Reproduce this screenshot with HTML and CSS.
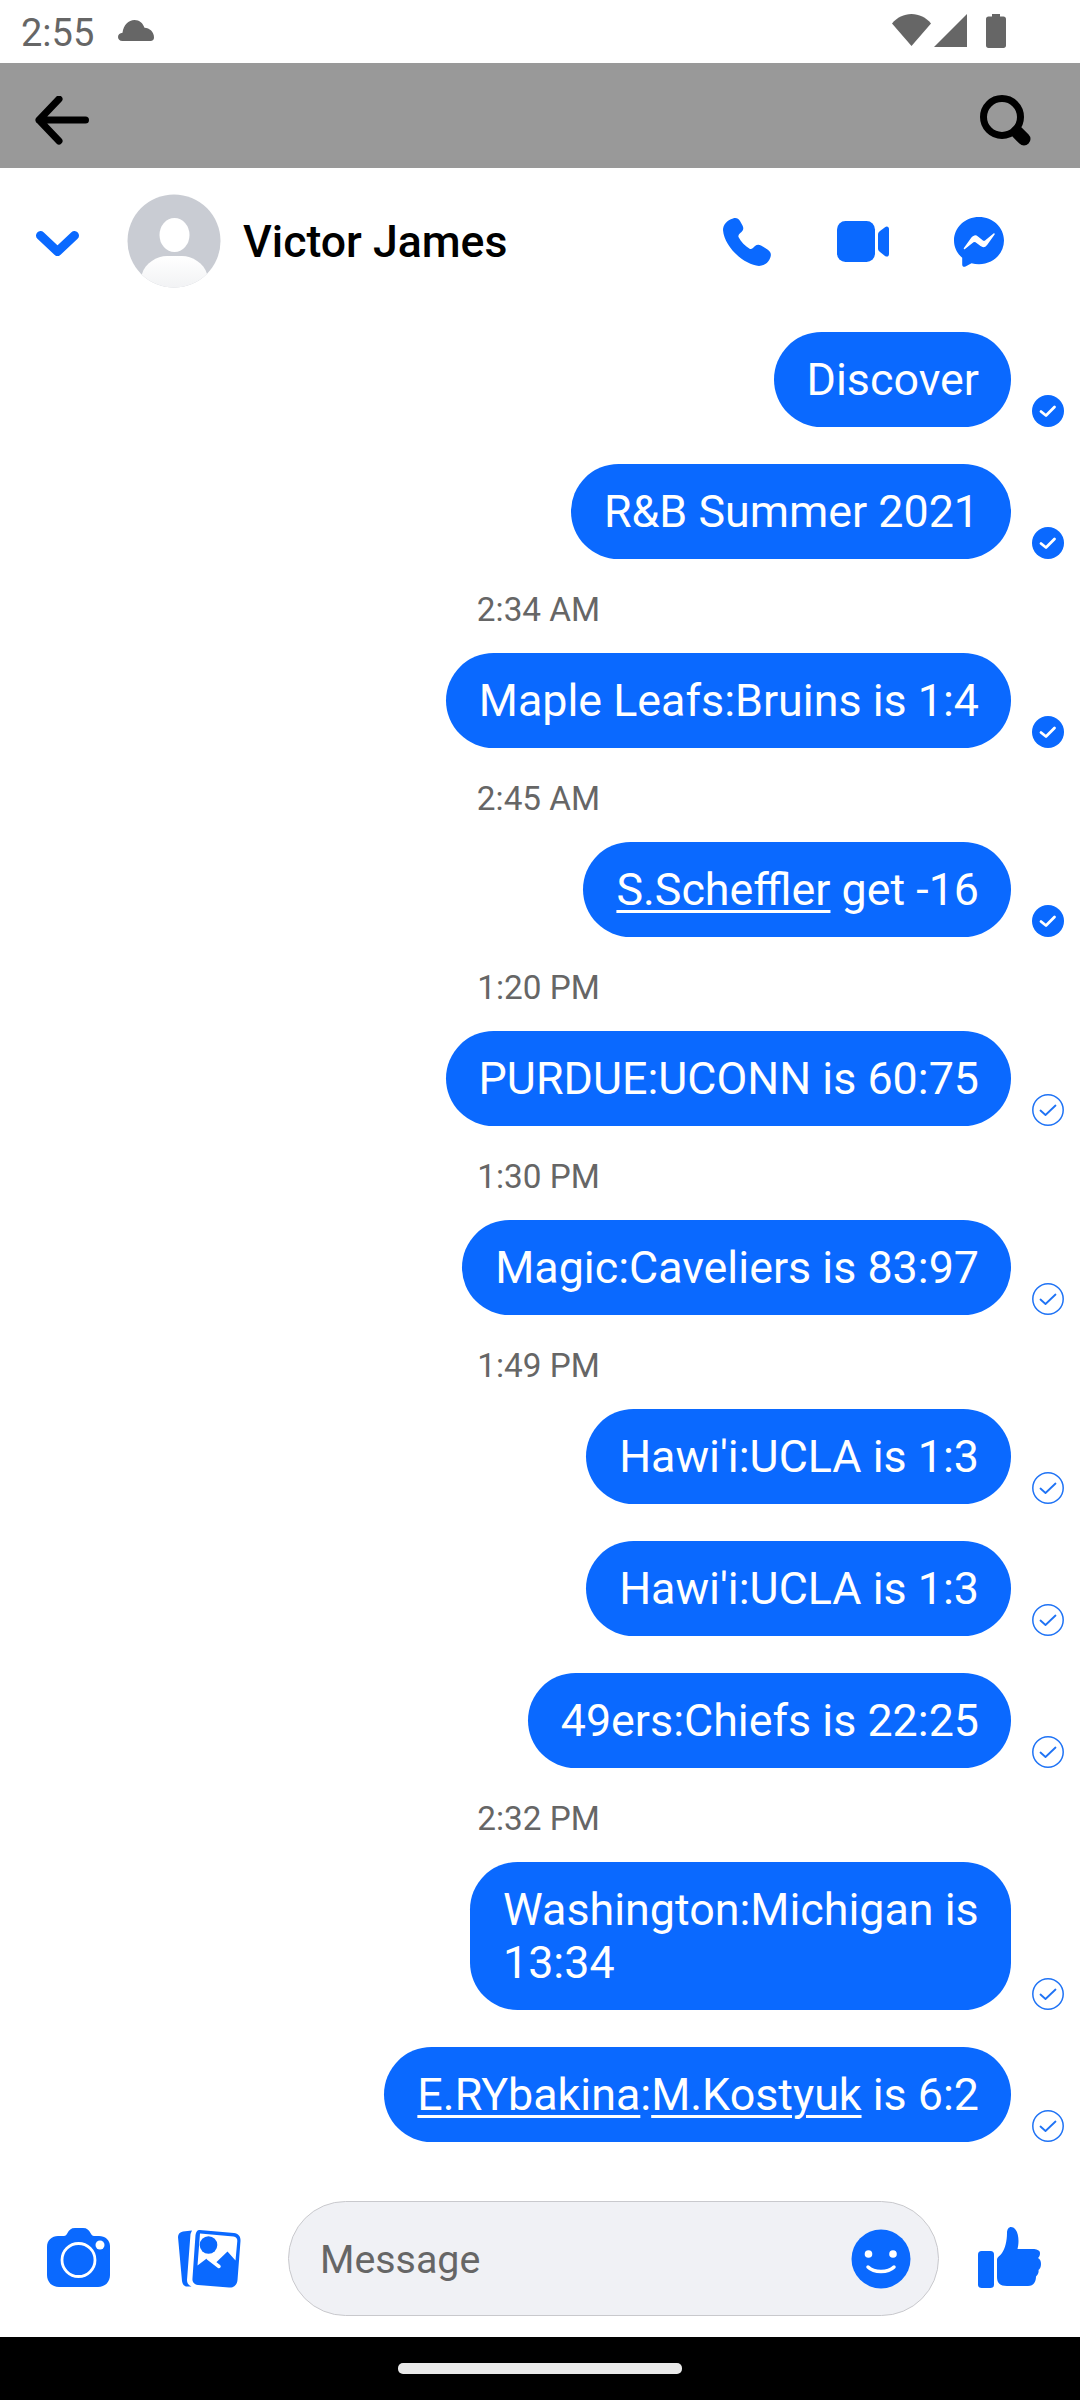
FILE: index.html
```html
<!DOCTYPE html>
<html lang="en">
<head>
<meta charset="utf-8">
<title>Victor James</title>
<link rel="stylesheet" href="styles.css">
</head>
<body>
<div class="screen">
  <div class="status">
    <span class="clock">2:55</span>
    <svg class="ic-cloud" viewBox="0 0 36 21"><path d="M4.5 21C1.5 21 0 19.300 0 17C0 14.500 2 13 4.500 12.700C5.500 5 10.500 0 16.500 0C21.500 0 25 3.200 26.500 7.800C31.500 8 36 12 36 17.500C36 19.800 34.800 21 32.500 21Z"/></svg>
    <span class="status-space"></span>
    <svg class="ic-wifi" viewBox="0 0 39 32"><path d="M0 9.500C5 3.500 12 0 19.500 0C27 0 34 3.500 39 9.500L19.500 32Z"/></svg>
    <svg class="ic-signal" viewBox="0 0 33 33"><path d="M33 0V33H0Z"/></svg>
    <svg class="ic-battery" viewBox="0 0 20 34"><path d="M6 0H14V2.500H17.500C19 2.500 20 3.500 20 5V31.500C20 33 19 34 17.500 34H2.500C1 34 0 33 0 31.500V5C0 3.500 1 2.500 2.500 2.500H6Z"/></svg>
  </div>

  <div class="appbar">
    <svg class="ic-back" viewBox="0 0 54 50"><path d="M4 24H50.500M24 3L4 24L24 45" fill="none" stroke="#000" stroke-width="7" stroke-linecap="round" stroke-linejoin="round"/></svg>
    <svg class="ic-search" viewBox="0 0 54 54"><circle cx="22" cy="22" r="18.500" fill="none" stroke="#000" stroke-width="7"/><path d="M37 37L44 44" stroke="#000" stroke-width="13" stroke-linecap="round"/></svg>
  </div>

  <header class="chat-head">
    <svg class="ic-chevron" viewBox="0 0 43 25"><path d="M4.500 4.500L21.500 20.500L38.500 4.500" fill="none" stroke="#0a69ff" stroke-width="9" stroke-linecap="round" stroke-linejoin="round"/></svg>
    <svg class="avatar" viewBox="0 0 94 94">
      <defs>
        <clipPath id="av"><circle cx="47" cy="47" r="46.500"/></clipPath>
        <linearGradient id="avb" x1="0" y1="0" x2="0" y2="1"><stop offset="0" stop-color="#fff"/><stop offset="1" stop-color="#eff0f2"/></linearGradient>
      </defs>
      <circle cx="47" cy="47" r="46.500" fill="#c9ccd3"/>
      <ellipse cx="47.500" cy="41" rx="15" ry="17" fill="#fff"/>
      <path clip-path="url(#av)" d="M15 80C18 69 30 62 40 62H55C65 62 77 69 80 80V100H15Z" fill="url(#avb)"/>
    </svg>
    <div class="name">Victor James</div>
    <div class="head-actions">
      <svg class="ic-phone" viewBox="0 0 48 48"><path d="M10 .5C13 -.5 15.500 .5 17 3L19.500 7.500C20.800 10 20.500 12 18.500 14C16.500 15.500 15 17 15.500 19C18 24 22 28 27 31C29 31.500 30.500 29.500 32 28C34 26.500 36 26.500 38 27.500L44.500 31.500C47.500 33.500 48.500 36 47.500 39C46 44 41.500 48 36 48C22 47 1.500 30 0 12C0 7 4 2 10 .5Z"/></svg>
      <svg class="ic-video" viewBox="0 0 52 41"><rect x="0" y="0" width="38" height="41" rx="8.500"/><path d="M41 13.500C41 12 41.800 11 43 10L48 6.200C50 4.800 52 5.800 52 8V33C52 35.400 50 36.200 48 35L43 31C41.800 30 41 29 41 27.500Z"/></svg>
      <svg class="ic-messenger" viewBox="0 0 50 50">
        <path d="M25 0C11.200 0 0 10.200 0 23.500C0 30.500 3.200 36.500 8.200 40.700V47.500C8.200 49.500 9.800 50.300 11.500 49.500L17.500 46.300C19.900 46.900 22.400 47.200 25 47.200C38.800 47.200 50 36.800 50 23.500C50 10.200 38.800 0 25 0Z"/>
        <path d="M10.500 31.500L18 21C19.500 19 21.500 18.500 23.500 20L28.500 24C29.500 24.700 30.500 24.700 31.500 24L40 17L32.500 27.500C31 29.500 29 30 27 28.500L22 24.700C21 24 20 24 19 24.700Z" fill="#fff" stroke="#fff" stroke-width="1.500" stroke-linejoin="round"/>
      </svg>
    </div>
  </header>

  <main class="thread">
    <div class="row"><div class="bubble">Discover</div><svg class="tick"><use href="#tick-full"/></svg></div>
    <div class="row"><div class="bubble">R&amp;B Summer 2021</div><svg class="tick"><use href="#tick-full"/></svg></div>
    <div class="time">2:34 AM</div>
    <div class="row"><div class="bubble">Maple Leafs:Bruins is 1:4</div><svg class="tick"><use href="#tick-full"/></svg></div>
    <div class="time">2:45 AM</div>
    <div class="row"><div class="bubble"><span class="link">S.Scheffler</span> get -16</div><svg class="tick"><use href="#tick-full"/></svg></div>
    <div class="time">1:20 PM</div>
    <div class="row"><div class="bubble">PURDUE:UCONN is 60:75</div><svg class="tick"><use href="#tick-line"/></svg></div>
    <div class="time">1:30 PM</div>
    <div class="row"><div class="bubble">Magic:Caveliers is 83:97</div><svg class="tick"><use href="#tick-line"/></svg></div>
    <div class="time">1:49 PM</div>
    <div class="row"><div class="bubble">Hawi'i:UCLA is 1:3</div><svg class="tick"><use href="#tick-line"/></svg></div>
    <div class="row"><div class="bubble">Hawi'i:UCLA is 1:3</div><svg class="tick"><use href="#tick-line"/></svg></div>
    <div class="row"><div class="bubble">49ers:Chiefs is 22:25</div><svg class="tick"><use href="#tick-line"/></svg></div>
    <div class="time">2:32 PM</div>
    <div class="row"><div class="bubble bubble-wrap">Washington:Michigan is 13:34</div><svg class="tick"><use href="#tick-line"/></svg></div>
    <div class="row"><div class="bubble"><span class="link">E.RYbakina</span>:<span class="link">M.Kostyuk</span> is 6:2</div><svg class="tick"><use href="#tick-line"/></svg></div>
  </main>

  <footer class="composer">
    <svg class="ic-camera" viewBox="0 0 63 59">
      <path d="M11 8H17C18.500 8 19.500 7 20.500 5C22 2 24 0 28 0H36C40 0 42 2 43.500 5C44.500 7 45.500 8 47 8H52C58 8 63 12 63 18V47C63 54 58 59 51 59H12C5 59 0 54 0 47V19C0 12 5 8 11 8Z"/>
      <circle cx="31.500" cy="32" r="16.500" fill="none" stroke="#fff" stroke-width="2.800"/>
      <circle cx="53" cy="17" r="4.500" fill="#fff"/>
    </svg>
    <svg class="ic-gallery" viewBox="0 0 63 58">
      <path d="M5 1.500L14 .5L12.500 4L9 50C9 53 10 55 13.500 56.500H9C6 56.500 4.500 54 4 51L0 7C0 4 2 2 5 1.500Z"/>
      <path d="M21.500 0L56 3C60 3.500 63 6.500 62.500 11L59.500 50C59 55 55.500 58 51 57.500L20 55C16 54.500 14 52 14.500 48L17.500 5C18 2 19 0 21.500 0Z"/>
      <path d="M22 3.500L55.500 6.500C58 6.800 59.500 8.500 59.300 11L57.500 30.500L49.500 21.500L37.500 33L30 27.500L19.500 35.500L22 3.500Z" fill="#fff"/>
      <path d="M30 28L41 36.500" stroke="#fff" stroke-width="3.500" stroke-linecap="round"/>
      <circle cx="30.500" cy="15" r="8.800"/>
    </svg>
    <div class="field">
      <span class="placeholder">Message</span>
      <svg class="ic-emoji" viewBox="0 0 60 60">
        <circle cx="30" cy="30" r="29.500"/>
        <circle cx="17.500" cy="25" r="3.800" fill="#fff"/>
        <circle cx="42" cy="25" r="3.800" fill="#fff"/>
        <path d="M17 38C23 44 37 44 43 38" fill="none" stroke="#fff" stroke-width="3.500" stroke-linecap="round"/>
      </svg>
    </div>
    <svg class="ic-like" viewBox="0 0 63 61">
      <rect x="0" y="24" width="16" height="37" rx="3.500"/>
      <path d="M19 33C19 30 22 29 24 26C27 22 29 14 29 6C29 2 31 0 33 0C37 0 40.500 5 40.500 14C40.500 17 40 20 39.500 22H55C58 22 62 23 62 26C62 29 61 30 60 31C62 32 63 34 63 37C63 40 62 42 60.500 43C61 45 60 48 58 49.500C58 54 56 59 50 59H29C22 59 19 56 19 50Z"/>
    </svg>
  </footer>

  <div class="navbar"><span class="home-pill"></span></div>
</div>

<svg class="defs" aria-hidden="true">
  <symbol id="tick-full" viewBox="0 0 32 32">
    <circle cx="16" cy="16" r="16" fill="#0a69ff"/>
    <path d="M9 16.500L14 20.500L22.500 12" fill="none" stroke="#fff" stroke-width="2.800" stroke-linecap="round" stroke-linejoin="round"/>
  </symbol>
  <symbol id="tick-line" viewBox="0 0 32 32">
    <circle cx="16" cy="16" r="15.200" fill="none" stroke="#1f73f5" stroke-width="1.500"/>
    <path d="M8.500 16.500L13.500 21L23.500 11.500" fill="none" stroke="#1f73f5" stroke-width="1.800" stroke-linecap="round" stroke-linejoin="round"/>
  </symbol>
</svg>
</body>
</html>
```

FILE: styles.css
```css
* { box-sizing: border-box; }
html, body { margin: 0; padding: 0; background: #fff; }
body { font-family: Roboto, "Liberation Sans", sans-serif; }
.defs { position: absolute; width: 0; height: 0; }

.screen {
  width: 1080px;
  height: 2400px;
  display: flex;
  flex-direction: column;
  overflow: hidden;
}

.status {
  height: 63px;
  flex: none;
  display: flex;
  align-items: flex-start;
  padding: 14px 74px 0 21px;
  fill: #666;
}
.clock { font-size: 38px; line-height: 38px; color: #666; width: 97px; }
.ic-cloud { width: 36px; height: 21px; margin-top: 6px; }
.status-space { flex: 1; }
.ic-wifi { width: 39px; height: 32px; }
.ic-signal { width: 33px; height: 33px; margin-left: 3px; }
.ic-battery { width: 20px; height: 34px; margin-left: 19px; }

.appbar {
  height: 105px;
  flex: none;
  background: #999;
  display: flex;
  justify-content: space-between;
  align-items: flex-start;
  padding: 0 46px 0 35px;
}
.ic-back { width: 54px; height: 50px; margin-top: 33px; }
.ic-search { width: 54px; height: 54px; margin-top: 32px; }

.chat-head {
  height: 147px;
  flex: none;
  display: flex;
  align-items: flex-start;
  padding: 27px 76px 0 36px;
}
.ic-chevron { width: 43px; height: 25px; margin-top: 36px; }
.avatar { width: 94px; height: 94px; margin: -1px 0 0 48px; }
.name { font-size: 44.6px; font-weight: 500; line-height: 50px; color: #000; margin: 22px 0 0 22px; flex: 1; }
.head-actions { display: flex; align-items: flex-start; fill: #0a69ff; }
.ic-phone { width: 48px; height: 48px; margin-top: 23px; }
.ic-video { width: 52px; height: 41px; margin: 26px 0 0 66px; }
.ic-messenger { width: 50px; height: 50px; margin: 22px 0 0 65px; }

.thread {
  flex: 1;
  display: flex;
  flex-direction: column;
  padding-top: 17px;
  min-height: 0;
}
.row {
  flex: none;
  display: flex;
  justify-content: flex-end;
  align-items: flex-end;
  gap: 21px;
  padding-right: 16px;
  margin-bottom: 37px;
}
.row:has(+ .time) { margin-bottom: 0; }
.bubble {
  background: #0a69ff;
  color: #fff;
  font-size: 44.8px;
  line-height: 53px;
  padding: 21px 32px 21px 33px;
  border-radius: 47.5px;
  white-space: nowrap;
}
.bubble-wrap { white-space: normal; width: 541px; padding-right: 16px; }
.link { text-decoration: underline; text-decoration-thickness: 3px; text-underline-offset: 5px; }
.tick { width: 32px; height: 32px; flex: none; }
.time {
  flex: none;
  height: 94px;
  padding: 33px 3px 0 0;
  text-align: center;
  font-size: 33.3px;
  line-height: 36px;
  color: #666;
}

.composer {
  flex: none;
  height: 146px;
  display: flex;
  align-items: flex-start;
  padding: 10px 0 0 47px;
  fill: #0a69ff;
}
.ic-camera { width: 63px; height: 59px; margin-top: 27px; }
.ic-gallery { width: 63px; height: 58px; margin: 29px 0 0 68px; }
.field {
  width: 651px;
  height: 115px;
  margin-left: 47px;
  background: #f0f1f5;
  border: 1.5px solid #c9c9cd;
  border-radius: 57.5px;
  display: flex;
  align-items: center;
  justify-content: space-between;
  padding: 0 27px 0 31px;
}
.placeholder { font-size: 39.4px; color: #666; padding-top: 2px; }
.ic-emoji { width: 60px; height: 60px; }
.ic-like { width: 63px; height: 61px; margin: 26px 0 0 39px; }

.navbar {
  flex: none;
  height: 63px;
  background: #000;
  display: flex;
  justify-content: center;
  padding-top: 26px;
}
.home-pill { width: 284px; height: 11px; background: #eaeaea; border-radius: 5px; }
```
